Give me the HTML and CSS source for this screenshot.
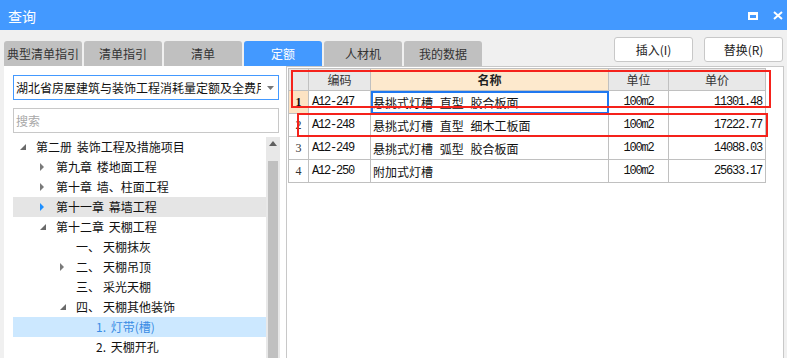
FILE: index.html
```html
<!DOCTYPE html>
<html lang="zh-CN">
<head>
    <meta charset="UTF-8">
    <title>查询</title>
    <link rel="stylesheet" href="styles.css">
</head>
<body>
    <!-- title bar -->
    <div class="titlebar">
        <span class="title">查询</span>
        <div class="win-ctrls">
            <svg width="10" height="8" viewBox="0 0 10 8"><path d="M0 0H10V8H0Z M2 3V6H8V3Z" fill="#fff" fill-rule="evenodd"/></svg>
            <svg width="10" height="9" viewBox="0 0 10 9"><path d="M1 1L9 8M9 1L1 8" stroke="#fff" stroke-width="2"/></svg>
        </div>
    </div>

    <!-- tabs + actions -->
    <div class="toolbar">
        <div class="tabs">
            <div class="tab">典型清单指引</div>
            <div class="tab">清单指引</div>
            <div class="tab">清单</div>
            <div class="tab active">定额</div>
            <div class="tab">人材机</div>
            <div class="tab">我的数据</div>
        </div>
        <div class="actions">
            <button class="btn">插入(I)</button>
            <button class="btn">替换(R)</button>
        </div>
    </div>

    <div class="main">
        <!-- left: library + tree -->
        <div class="left">
            <div class="select">
                <span class="select-text">湖北省房屋建筑与装饰工程消耗量定额及全费用基价表(2018)</span>
                <svg class="select-arrow" width="7" height="4" viewBox="0 0 7 4"><path d="M0 0H7L3.5 4Z" fill="#777"/></svg>
            </div>
            <div class="search">搜索</div>
            <div class="tree-wrap">
                <div class="tree">
                    <div class="node lv0"><span class="arr"><svg width="6" height="6" viewBox="0 0 6 6"><path d="M6 0V6H0Z" fill="#6a6a6a"/></svg></span>第二册 装饰工程及措施项目</div>
                    <div class="node lv1"><span class="arr"><svg width="4" height="8" viewBox="0 0 4 8"><path d="M0 0L4 4L0 8Z" fill="#7a7a7a"/></svg></span>第九章 楼地面工程</div>
                    <div class="node lv1"><span class="arr"><svg width="4" height="8" viewBox="0 0 4 8"><path d="M0 0L4 4L0 8Z" fill="#7a7a7a"/></svg></span>第十章 墙、柱面工程</div>
                    <div class="node lv1 hover"><span class="arr"><svg width="4" height="8" viewBox="0 0 4 8"><path d="M0 0L4 4L0 8Z" fill="#1e8fff"/></svg></span>第十一章 幕墙工程</div>
                    <div class="node lv1"><span class="arr"><svg width="6" height="6" viewBox="0 0 6 6"><path d="M6 0V6H0Z" fill="#6a6a6a"/></svg></span>第十二章 天棚工程</div>
                    <div class="node lv2"><span class="arr"></span><span class="num">一、</span>天棚抹灰</div>
                    <div class="node lv2"><span class="arr"><svg width="4" height="8" viewBox="0 0 4 8"><path d="M0 0L4 4L0 8Z" fill="#7a7a7a"/></svg></span><span class="num">二、</span>天棚吊顶</div>
                    <div class="node lv2"><span class="arr"></span><span class="num">三、</span>采光天棚</div>
                    <div class="node lv2"><span class="arr"><svg width="6" height="6" viewBox="0 0 6 6"><path d="M6 0V6H0Z" fill="#6a6a6a"/></svg></span><span class="num">四、</span>天棚其他装饰</div>
                    <div class="node lv3 selected"><span class="arr"></span>1. 灯带(槽)</div>
                    <div class="node lv3"><span class="arr"></span>2. 天棚开孔</div>
                </div>
                <div class="scrollbar">
                    <svg class="sb-up" width="8" height="5" viewBox="0 0 8 5"><path d="M0 5L4 0L8 5Z" fill="#606060"/></svg>
                    <div class="sb-thumb"></div>
                </div>
            </div>
        </div>

        <!-- right: quota table -->
        <div class="right">
            <table class="grid">
                <colgroup>
                    <col style="width:20px">
                    <col style="width:62px">
                    <col style="width:238px">
                    <col style="width:60px">
                    <col style="width:97px">
                </colgroup>
                <thead>
                    <tr>
                        <th></th>
                        <th>编码</th>
                        <th class="sorted">名称</th>
                        <th>单位</th>
                        <th>单价</th>
                    </tr>
                </thead>
                <tbody>
                    <tr class="current">
                        <td class="rn">1</td>
                        <td class="code">A12-247</td>
                        <td class="name focus">悬挑式灯槽 直型 胶合板面</td>
                        <td class="unit">100m2</td>
                        <td class="price">11301.48</td>
                    </tr>
                    <tr>
                        <td class="rn">2</td>
                        <td class="code">A12-248</td>
                        <td class="name">悬挑式灯槽 直型 细木工板面</td>
                        <td class="unit">100m2</td>
                        <td class="price">17222.77</td>
                    </tr>
                    <tr>
                        <td class="rn">3</td>
                        <td class="code">A12-249</td>
                        <td class="name">悬挑式灯槽 弧型 胶合板面</td>
                        <td class="unit">100m2</td>
                        <td class="price">14088.03</td>
                    </tr>
                    <tr>
                        <td class="rn">4</td>
                        <td class="code">A12-250</td>
                        <td class="name">附加式灯槽</td>
                        <td class="unit">100m2</td>
                        <td class="price">25633.17</td>
                    </tr>
                </tbody>
            </table>
            <!-- annotation boxes -->
            <div class="mark mark-1"></div>
            <div class="mark mark-2"></div>
        </div>
    </div>
</body>
</html>
```

FILE: styles.css
```css
html, body {
    height: 100%;
}
body {
    margin: 0;
    background: #f0f0f0;
    font-family: "Noto Sans CJK SC", "Microsoft YaHei", sans-serif;
    font-size: 12px;
    color: #222;
    overflow: hidden;
}

/* title bar */
.titlebar {
    height: 30px;
    background: #4399ff;
    display: flex;
    align-items: center;
    justify-content: space-between;
    padding: 0 4px 0 8px;
}
.title {
    color: #fff;
    font-size: 14px;
    line-height: 16px;
    margin-top: 2px;
}
.win-ctrls {
    display: flex;
    align-items: center;
    gap: 15px;
    margin-top: 1px;
}

/* tabs + buttons */
.toolbar {
    height: 36px;
    display: flex;
    justify-content: space-between;
    align-items: flex-end;
    padding: 0 4px;
}
.tabs {
    display: flex;
    gap: 2px;
}
.tab {
    width: 78px;
    height: 25px;
    line-height: 25px;
    text-align: center;
    background: #c0c0c0;
    color: #333;
    border-radius: 3px 3px 0 0;
    white-space: nowrap;
}
.tab.active {
    background: #4399ff;
    color: #fff;
}
.actions {
    display: flex;
    gap: 11px;
    margin-bottom: 4px;
}
.btn {
    width: 79px;
    height: 25px;
    background: #fff;
    border: 1px solid #c8c8c8;
    border-radius: 3px;
    font-family: inherit;
    font-size: 12px;
    color: #222;
    padding: 0;
}

/* main area */
.main {
    display: flex;
    height: calc(100% - 66px);
    padding: 0 3px 0 4px;
}
.left {
    width: 282px;
    flex-shrink: 0;
    background: #fff;
    padding: 9px 7px 0 9px;
    box-sizing: border-box;
    display: flex;
    flex-direction: column;
}
.select {
    height: 25px;
    border: 1px solid #4399ff;
    box-sizing: border-box;
    display: flex;
    align-items: center;
    padding: 0 4px 0 2px;
}
.select-text {
    flex: 1;
    overflow: hidden;
    white-space: nowrap;
    line-height: 23px;
    color: #111;
}
.select-arrow {
    margin-left: 6px;
    flex-shrink: 0;
}
.search {
    height: 25px;
    margin-top: 8px;
    border: 1px solid #c8c8c8;
    box-sizing: border-box;
    line-height: 23px;
    padding-left: 2px;
    color: #a8a8a8;
}

/* tree */
.tree-wrap {
    flex: 1;
    display: flex;
    margin-top: 4px;
    margin-right: -1px;
    min-height: 0;
}
.tree {
    width: 253px;
}
.node {
    height: 20px;
    line-height: 20px;
    display: flex;
    align-items: center;
    white-space: pre;
    word-spacing: 2px;
    color: #111;
}
.node.lv0 { padding-left: 0; }
.node.lv1 { padding-left: 20px; }
.node.lv2 { padding-left: 40px; }
.node.lv3 { padding-left: 60px; }
.arr {
    width: 23px;
    height: 20px;
    flex-shrink: 0;
    display: flex;
    align-items: center;
    padding-left: 7px;
    box-sizing: border-box;
}
.num {
    display: inline-block;
    width: 27px;
}
.node.hover {
    background: #e5e5e5;
}
.node.selected {
    background: #cce8ff;
    color: #3a8ce4;
}
.scrollbar {
    width: 14px;
    background: #e8e8e8;
    position: relative;
    display: flex;
    flex-direction: column;
    align-items: center;
}
.sb-up {
    margin-top: 4px;
}
.sb-thumb {
    width: 10px;
    flex: 1;
    margin-top: 15px;
    background: #c0c0c0;
}

/* right panel */
.right {
    flex: 1;
    background: #fff;
    border: 1px solid #c8c8c8;
    border-bottom: none;
    padding: 1px;
    position: relative;
}
.grid {
    border-collapse: collapse;
    table-layout: fixed;
    width: 478px;
}
.grid th, .grid td {
    border: 1px solid #c0c0c0;
    padding: 0;
    white-space: nowrap;
    overflow: hidden;
}
.grid th {
    height: 21px;
    background: #e8e8e8;
    font-weight: normal;
    color: #333;
    text-align: center;
}
.grid th.sorted {
    background: #fde9cd;
    font-weight: bold;
    color: #222;
}
.grid td {
    height: 22px;
}
.rn {
    font-family: "Liberation Serif", serif;
    font-size: 12px;
    text-align: center;
    color: #333;
}
.current .rn {
    background: #fde3c3;
    font-weight: bold;
    color: #111;
}
.code, .unit, .price {
    font-family: "Liberation Mono", monospace;
    font-size: 12px;
    letter-spacing: -1.2px;
    color: #111;
}
.code {
    padding-left: 3px !important;
}
.unit {
    text-align: center;
}
.price {
    text-align: right;
    padding-right: 3px !important;
}
.name {
    padding-left: 2px !important;
    font-size: 12px;
    word-spacing: 4px;
    color: #111;
}
.name.focus {
    outline: 2px solid #1f78f0;
    outline-offset: -2px;
}

/* red annotation boxes */
.mark {
    position: absolute;
    border: 2px solid #f5221b;
    box-sizing: border-box;
}
.mark-1 {
    left: 4px;
    top: 3px;
    width: 480px;
    height: 38px;
}
.mark-2 {
    left: 10px;
    top: 46px;
    width: 471px;
    height: 24px;
}
```
